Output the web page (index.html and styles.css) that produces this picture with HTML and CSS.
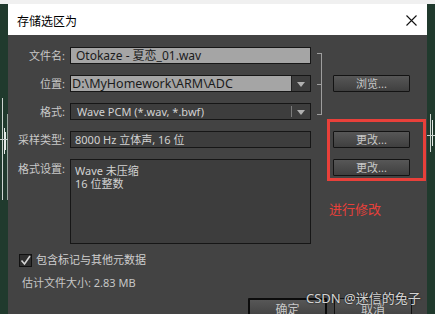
FILE: index.html
```html
<!DOCTYPE html>
<html>
<head>
  <title>存储选区为</title>
  <link rel="stylesheet" href="styles.css">
</head>
<body>
  <div class="topstrip"></div>
  <div class="desk">
    <div class="side">
      <svg width="8" height="279" viewBox="0 0 8 279">
        <line x1="2.5" y1="94" x2="2.5" y2="196" stroke="#cfd6d2" stroke-width="1"/>
        <line x1="7.5" y1="110" x2="7.5" y2="196" stroke="#9aa8a0" stroke-width="1"/>
        <line x1="4.5" y1="124" x2="4.5" y2="150" stroke="#e6ebe8" stroke-width="1"/>
        <line x1="5.5" y1="128" x2="5.5" y2="146" stroke="#e6ebe8" stroke-width="1"/>
        <line x1="0" y1="135.5" x2="8" y2="135.5" stroke="#c8d0cc" stroke-width="1"/>
      </svg>
    </div>

    <div class="dialog">
      <div class="titlebar">
        <span class="title">存储选区为</span>
        <svg class="close" width="11" height="11" viewBox="0 0 11 11">
          <path d="M0.5 0.5 L10.5 10.5 M10.5 0.5 L0.5 10.5" stroke="#111" stroke-width="1.1" fill="none"/>
        </svg>
      </div>

      <div class="panel">
        <div class="form">
          <label class="lbl r1">文件名:</label>
          <div class="field light name r1">Otokaze - 夏恋_01.wav</div>
          <div class="bracket">
            <div class="bracket-top"></div>
            <div class="bracket-bot"></div>
          </div>

          <label class="lbl r2">位置:</label>
          <div class="select r2">
            <div class="value light-value">D:\MyHomework\ARM\ADC</div>
            <div class="arrow"><i class="tri"></i></div>
          </div>
          <button class="btn side-btn r2">浏览...</button>

          <label class="lbl r3">格式:</label>
          <div class="select r3">
            <div class="value">Wave PCM (*.wav, *.bwf)</div>
            <span class="sep"></span>
            <div class="arrow"><i class="tri"></i></div>
          </div>

          <label class="lbl r4">采样类型:</label>
          <div class="field r4">8000 Hz 立体声, 16 位</div>
          <button class="btn side-btn r4">更改...</button>

          <label class="lbl top r5">格式设置:</label>
          <div class="field area r5">Wave 未压缩<br>16 位整数</div>
          <button class="btn side-btn top r5">更改...</button>
        </div>

        <div class="check-row">
          <span class="checkbox">
            <svg width="11" height="11" viewBox="0 0 11 11">
              <path d="M1.5 5.5 L4.5 9 L10 1" stroke="#d4d4d4" stroke-width="1.6" fill="none"/>
            </svg>
          </span>
          <span>包含标记与其他元数据</span>
        </div>

        <div class="estimate">估计文件大小: 2.83 MB</div>

        <div class="actions">
          <button class="btn action default">确定</button>
          <button class="btn action">取消</button>
        </div>

        <div class="mark-box"></div>
        <div class="mark-text">进行修改</div>
        <div class="watermark">CSDN @迷信的兔子</div>
      </div>
    </div>

    <div class="side">
      <svg width="8" height="279" viewBox="0 0 8 279">
        <line x1="3.5" y1="110" x2="3.5" y2="148" stroke="#cfd6d2" stroke-width="1"/>
        <line x1="5.5" y1="116" x2="5.5" y2="142" stroke="#e6ebe8" stroke-width="1"/>
        <line x1="0" y1="131.5" x2="8" y2="131.5" stroke="#c8d0cc" stroke-width="1"/>
      </svg>
    </div>
  </div>
</body>
</html>
```

FILE: styles.css
```css
body {
  margin: 0;
  width: 435px;
  height: 314px;
  overflow: hidden;
  background-color: #203a2d;
  font-family: "Noto Sans", "Noto Sans CJK SC", sans-serif;
}

.topstrip {
  height: 4px;
  background-color: #f0f0f0;
}

.desk {
  display: flex;
  height: 310px;
}

.side {
  width: 8px;
  flex: none;
}

.side svg {
  display: block;
}

.dialog {
  width: 419px;
  flex: none;
  display: flex;
  flex-direction: column;
  background-color: #434343;
}

.titlebar {
  height: 31px;
  flex: none;
  background-color: #fff;
  display: flex;
  align-items: center;
  justify-content: space-between;
  padding: 0 10px 0 9px;
}

.title {
  font-size: 12px;
  color: #000;
  margin-top: 3px;
}

.close {
  margin-top: 1px;
}

.panel {
  position: relative;
  flex: 1;
  padding: 12px 0 0 10px;
}

.form {
  display: grid;
  grid-template-columns: 52px 241px 22px 77px;
  grid-template-rows: 17px 17px 17px 17px 85px;
  row-gap: 11px;
}

.r1 { grid-row: 1; }
.r2 { grid-row: 2; }
.r3 { grid-row: 3; }
.r4 { grid-row: 4; }
.r5 { grid-row: 5; }

.lbl {
  grid-column: 1;
  font-size: 11px;
  line-height: 17px;
  color: #c8c8c8;
  text-align: right;
  padding-right: 5px;
  white-space: nowrap;
}

.lbl.top {
  line-height: 19px;
}

.field,
.select {
  grid-column: 2;
}

.field {
  box-sizing: border-box;
  border: 1px solid #161616;
  background-color: #3d3d3d;
  color: #d2d2d2;
  font-size: 11px;
  line-height: 15px;
  padding-left: 4px;
  white-space: nowrap;
}

.field.light {
  background-color: #a5a5a5;
  color: #1b1b1b;
}

.field.name {
  font-size: 12px;
  padding-left: 5px;
}

.field.area {
  line-height: 13px;
  padding-top: 4px;
}

.select {
  box-sizing: border-box;
  display: flex;
  align-items: stretch;
  border: 1px solid #161616;
  background-color: #3d3d3d;
}

.select .value {
  flex: 1;
  font-size: 11px;
  line-height: 15px;
  color: #d2d2d2;
  padding-left: 6px;
  white-space: nowrap;
}

.select .light-value {
  background-color: #a5a5a5;
  color: #1b1b1b;
  padding-left: 1px;
  border-right: 1px solid #222;
  font-size: 12.5px;
}

.sep {
  width: 1px;
  height: 11px;
  align-self: center;
  background-color: #7c7c7c;
}

.arrow {
  width: 18px;
  display: flex;
  align-items: center;
  justify-content: center;
}

.tri {
  width: 0;
  height: 0;
  border-left: 4px solid transparent;
  border-right: 4px solid transparent;
  border-top: 5px solid #b0b0b0;
  margin-top: 1px;
}

.bracket {
  grid-column: 3;
  grid-row: 1 / 4;
  display: flex;
  flex-direction: column;
  margin: 6px 0 5px 6px;
  width: 5px;
}

.bracket-top,
.bracket-bot {
  flex: 1;
  border-right: 1px solid #9e9e9e;
  border-bottom: 1px solid #9e9e9e;
}

.bracket-top {
  border-top: 1px solid #9e9e9e;
}

.btn {
  box-sizing: border-box;
  font-family: "Noto Sans", "Noto Sans CJK SC", sans-serif;
  font-size: 11px;
  color: #c8c8c8;
  background: linear-gradient(#575757, #3f3f3f);
  border: 1px solid #131313;
  border-radius: 1px;
  padding: 0;
  line-height: 14px;
}

.side-btn {
  grid-column: 4;
}

.side-btn.top {
  align-self: start;
  height: 17px;
}

.check-row {
  display: flex;
  align-items: center;
  gap: 4px;
  margin-top: 9px;
  padding-left: 1px;
  font-size: 11px;
  line-height: 14px;
  color: #cfcfcf;
}

.checkbox {
  box-sizing: border-box;
  width: 13px;
  height: 13px;
  border: 1px solid #111;
  background-color: #2f2f2f;
  display: flex;
  align-items: center;
  justify-content: center;
}

.checkbox svg {
  display: block;
}

.estimate {
  margin-top: 9px;
  padding-left: 4px;
  font-size: 11px;
  line-height: 14px;
  color: #c6c6c6;
}

.actions {
  display: flex;
  justify-content: flex-end;
  gap: 7px;
  margin-top: 8px;
  padding-right: 15px;
}

.action {
  width: 78px;
  height: 22px;
  font-size: 12px;
  padding-top: 2px;
}

.action.default {
  width: 79px;
  border: 2px solid #0c0c0c;
}

.mark-box {
  position: absolute;
  left: 319px;
  top: 84px;
  width: 99px;
  height: 62px;
  box-sizing: border-box;
  border: 3px solid #e8403a;
}

.mark-text {
  position: absolute;
  left: 321px;
  top: 165px;
  font-size: 13px;
  line-height: 18px;
  color: #e8403a;
}

.watermark {
  position: absolute;
  left: 298px;
  top: 254px;
  font-size: 13px;
  line-height: 18px;
  color: rgba(235, 235, 235, 0.9);
  text-shadow: 0 0 2px #222, 0 0 1px #222;
  white-space: nowrap;
}
```
